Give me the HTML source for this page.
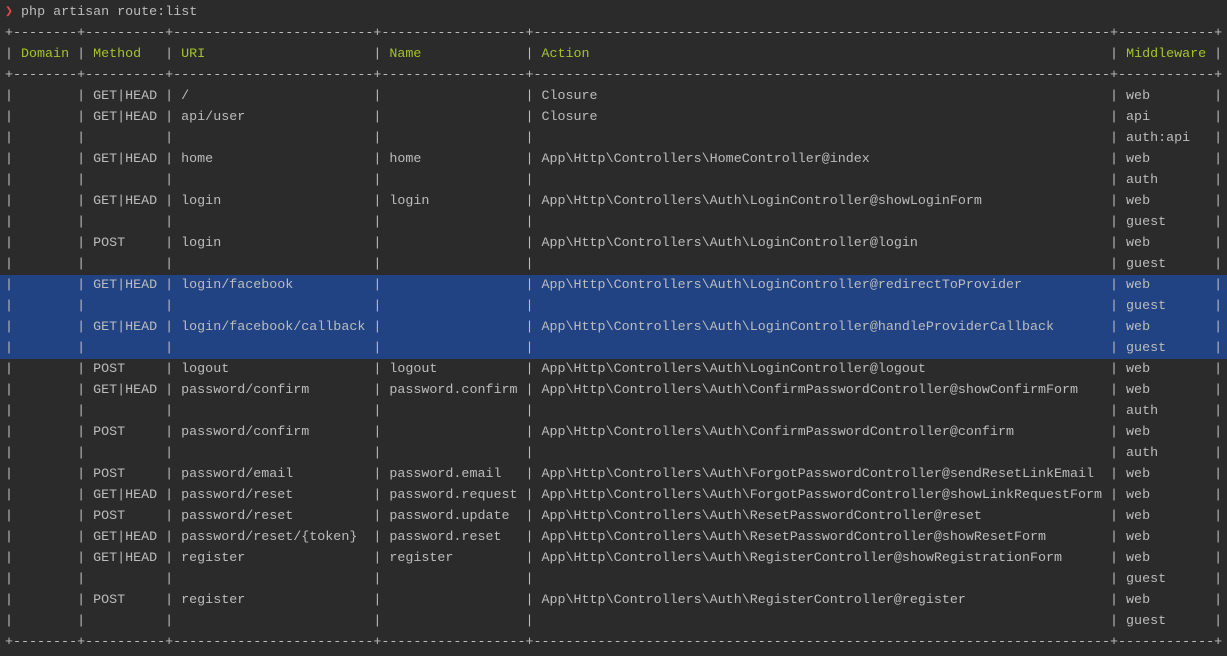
<!DOCTYPE html>
<html><head><meta charset="utf-8"><style>
html,body{margin:0;padding:0;background:#2b2b2b;width:1227px;height:656px;overflow:hidden}
.t{font-family:"Liberation Mono","DejaVu Sans Mono",monospace;font-size:13.35px;line-height:21px;color:#bcbcbc;padding:1.5px 0 0 5px}
.l{height:21px;white-space:pre}
.c{display:inline-block;overflow:hidden;vertical-align:top;white-space:pre}
.a{width:8ch}.b{width:10ch}.u{width:25ch}.n{width:18ch}.x{width:72ch}.m{width:12ch}
.h{color:#a6c22c}
.hl{background:#214283;margin-left:-5px;padding-left:5px}
.p{color:#e5484d}
</style></head><body><div class="t">
<div class="l"><span class="p">❯</span> php artisan route:list</div>
<div class="l">+<span class="c a">------------------------------------------------------------------------</span>+<span class="c b">------------------------------------------------------------------------</span>+<span class="c u">------------------------------------------------------------------------</span>+<span class="c n">------------------------------------------------------------------------</span>+<span class="c x">------------------------------------------------------------------------</span>+<span class="c m">------------------------------------------------------------------------</span>+</div>
<div class="l">|<span class="c a"> <span class="h">Domain</span></span>|<span class="c b"> <span class="h">Method</span></span>|<span class="c u"> <span class="h">URI</span></span>|<span class="c n"> <span class="h">Name</span></span>|<span class="c x"> <span class="h">Action</span></span>|<span class="c m"> <span class="h">Middleware</span></span>|</div>
<div class="l">+<span class="c a">------------------------------------------------------------------------</span>+<span class="c b">------------------------------------------------------------------------</span>+<span class="c u">------------------------------------------------------------------------</span>+<span class="c n">------------------------------------------------------------------------</span>+<span class="c x">------------------------------------------------------------------------</span>+<span class="c m">------------------------------------------------------------------------</span>+</div>
<div class="l">|<span class="c a"> </span>|<span class="c b"> GET|HEAD</span>|<span class="c u"> /</span>|<span class="c n"> </span>|<span class="c x"> Closure</span>|<span class="c m"> web</span>|</div>
<div class="l">|<span class="c a"> </span>|<span class="c b"> GET|HEAD</span>|<span class="c u"> api/user</span>|<span class="c n"> </span>|<span class="c x"> Closure</span>|<span class="c m"> api</span>|</div>
<div class="l">|<span class="c a"> </span>|<span class="c b"> </span>|<span class="c u"> </span>|<span class="c n"> </span>|<span class="c x"> </span>|<span class="c m"> auth:api</span>|</div>
<div class="l">|<span class="c a"> </span>|<span class="c b"> GET|HEAD</span>|<span class="c u"> home</span>|<span class="c n"> home</span>|<span class="c x"> App\Http\Controllers\HomeController@index</span>|<span class="c m"> web</span>|</div>
<div class="l">|<span class="c a"> </span>|<span class="c b"> </span>|<span class="c u"> </span>|<span class="c n"> </span>|<span class="c x"> </span>|<span class="c m"> auth</span>|</div>
<div class="l">|<span class="c a"> </span>|<span class="c b"> GET|HEAD</span>|<span class="c u"> login</span>|<span class="c n"> login</span>|<span class="c x"> App\Http\Controllers\Auth\LoginController@showLoginForm</span>|<span class="c m"> web</span>|</div>
<div class="l">|<span class="c a"> </span>|<span class="c b"> </span>|<span class="c u"> </span>|<span class="c n"> </span>|<span class="c x"> </span>|<span class="c m"> guest</span>|</div>
<div class="l">|<span class="c a"> </span>|<span class="c b"> POST</span>|<span class="c u"> login</span>|<span class="c n"> </span>|<span class="c x"> App\Http\Controllers\Auth\LoginController@login</span>|<span class="c m"> web</span>|</div>
<div class="l">|<span class="c a"> </span>|<span class="c b"> </span>|<span class="c u"> </span>|<span class="c n"> </span>|<span class="c x"> </span>|<span class="c m"> guest</span>|</div>
<div class="l hl">|<span class="c a"> </span>|<span class="c b"> GET|HEAD</span>|<span class="c u"> login/facebook</span>|<span class="c n"> </span>|<span class="c x"> App\Http\Controllers\Auth\LoginController@redirectToProvider</span>|<span class="c m"> web</span>|</div>
<div class="l hl">|<span class="c a"> </span>|<span class="c b"> </span>|<span class="c u"> </span>|<span class="c n"> </span>|<span class="c x"> </span>|<span class="c m"> guest</span>|</div>
<div class="l hl">|<span class="c a"> </span>|<span class="c b"> GET|HEAD</span>|<span class="c u"> login/facebook/callback</span>|<span class="c n"> </span>|<span class="c x"> App\Http\Controllers\Auth\LoginController@handleProviderCallback</span>|<span class="c m"> web</span>|</div>
<div class="l hl">|<span class="c a"> </span>|<span class="c b"> </span>|<span class="c u"> </span>|<span class="c n"> </span>|<span class="c x"> </span>|<span class="c m"> guest</span>|</div>
<div class="l">|<span class="c a"> </span>|<span class="c b"> POST</span>|<span class="c u"> logout</span>|<span class="c n"> logout</span>|<span class="c x"> App\Http\Controllers\Auth\LoginController@logout</span>|<span class="c m"> web</span>|</div>
<div class="l">|<span class="c a"> </span>|<span class="c b"> GET|HEAD</span>|<span class="c u"> password/confirm</span>|<span class="c n"> password.confirm</span>|<span class="c x"> App\Http\Controllers\Auth\ConfirmPasswordController@showConfirmForm</span>|<span class="c m"> web</span>|</div>
<div class="l">|<span class="c a"> </span>|<span class="c b"> </span>|<span class="c u"> </span>|<span class="c n"> </span>|<span class="c x"> </span>|<span class="c m"> auth</span>|</div>
<div class="l">|<span class="c a"> </span>|<span class="c b"> POST</span>|<span class="c u"> password/confirm</span>|<span class="c n"> </span>|<span class="c x"> App\Http\Controllers\Auth\ConfirmPasswordController@confirm</span>|<span class="c m"> web</span>|</div>
<div class="l">|<span class="c a"> </span>|<span class="c b"> </span>|<span class="c u"> </span>|<span class="c n"> </span>|<span class="c x"> </span>|<span class="c m"> auth</span>|</div>
<div class="l">|<span class="c a"> </span>|<span class="c b"> POST</span>|<span class="c u"> password/email</span>|<span class="c n"> password.email</span>|<span class="c x"> App\Http\Controllers\Auth\ForgotPasswordController@sendResetLinkEmail</span>|<span class="c m"> web</span>|</div>
<div class="l">|<span class="c a"> </span>|<span class="c b"> GET|HEAD</span>|<span class="c u"> password/reset</span>|<span class="c n"> password.request</span>|<span class="c x"> App\Http\Controllers\Auth\ForgotPasswordController@showLinkRequestForm</span>|<span class="c m"> web</span>|</div>
<div class="l">|<span class="c a"> </span>|<span class="c b"> POST</span>|<span class="c u"> password/reset</span>|<span class="c n"> password.update</span>|<span class="c x"> App\Http\Controllers\Auth\ResetPasswordController@reset</span>|<span class="c m"> web</span>|</div>
<div class="l">|<span class="c a"> </span>|<span class="c b"> GET|HEAD</span>|<span class="c u"> password/reset/{token}</span>|<span class="c n"> password.reset</span>|<span class="c x"> App\Http\Controllers\Auth\ResetPasswordController@showResetForm</span>|<span class="c m"> web</span>|</div>
<div class="l">|<span class="c a"> </span>|<span class="c b"> GET|HEAD</span>|<span class="c u"> register</span>|<span class="c n"> register</span>|<span class="c x"> App\Http\Controllers\Auth\RegisterController@showRegistrationForm</span>|<span class="c m"> web</span>|</div>
<div class="l">|<span class="c a"> </span>|<span class="c b"> </span>|<span class="c u"> </span>|<span class="c n"> </span>|<span class="c x"> </span>|<span class="c m"> guest</span>|</div>
<div class="l">|<span class="c a"> </span>|<span class="c b"> POST</span>|<span class="c u"> register</span>|<span class="c n"> </span>|<span class="c x"> App\Http\Controllers\Auth\RegisterController@register</span>|<span class="c m"> web</span>|</div>
<div class="l">|<span class="c a"> </span>|<span class="c b"> </span>|<span class="c u"> </span>|<span class="c n"> </span>|<span class="c x"> </span>|<span class="c m"> guest</span>|</div>
<div class="l">+<span class="c a">------------------------------------------------------------------------</span>+<span class="c b">------------------------------------------------------------------------</span>+<span class="c u">------------------------------------------------------------------------</span>+<span class="c n">------------------------------------------------------------------------</span>+<span class="c x">------------------------------------------------------------------------</span>+<span class="c m">------------------------------------------------------------------------</span>+</div>
</div></body></html>
